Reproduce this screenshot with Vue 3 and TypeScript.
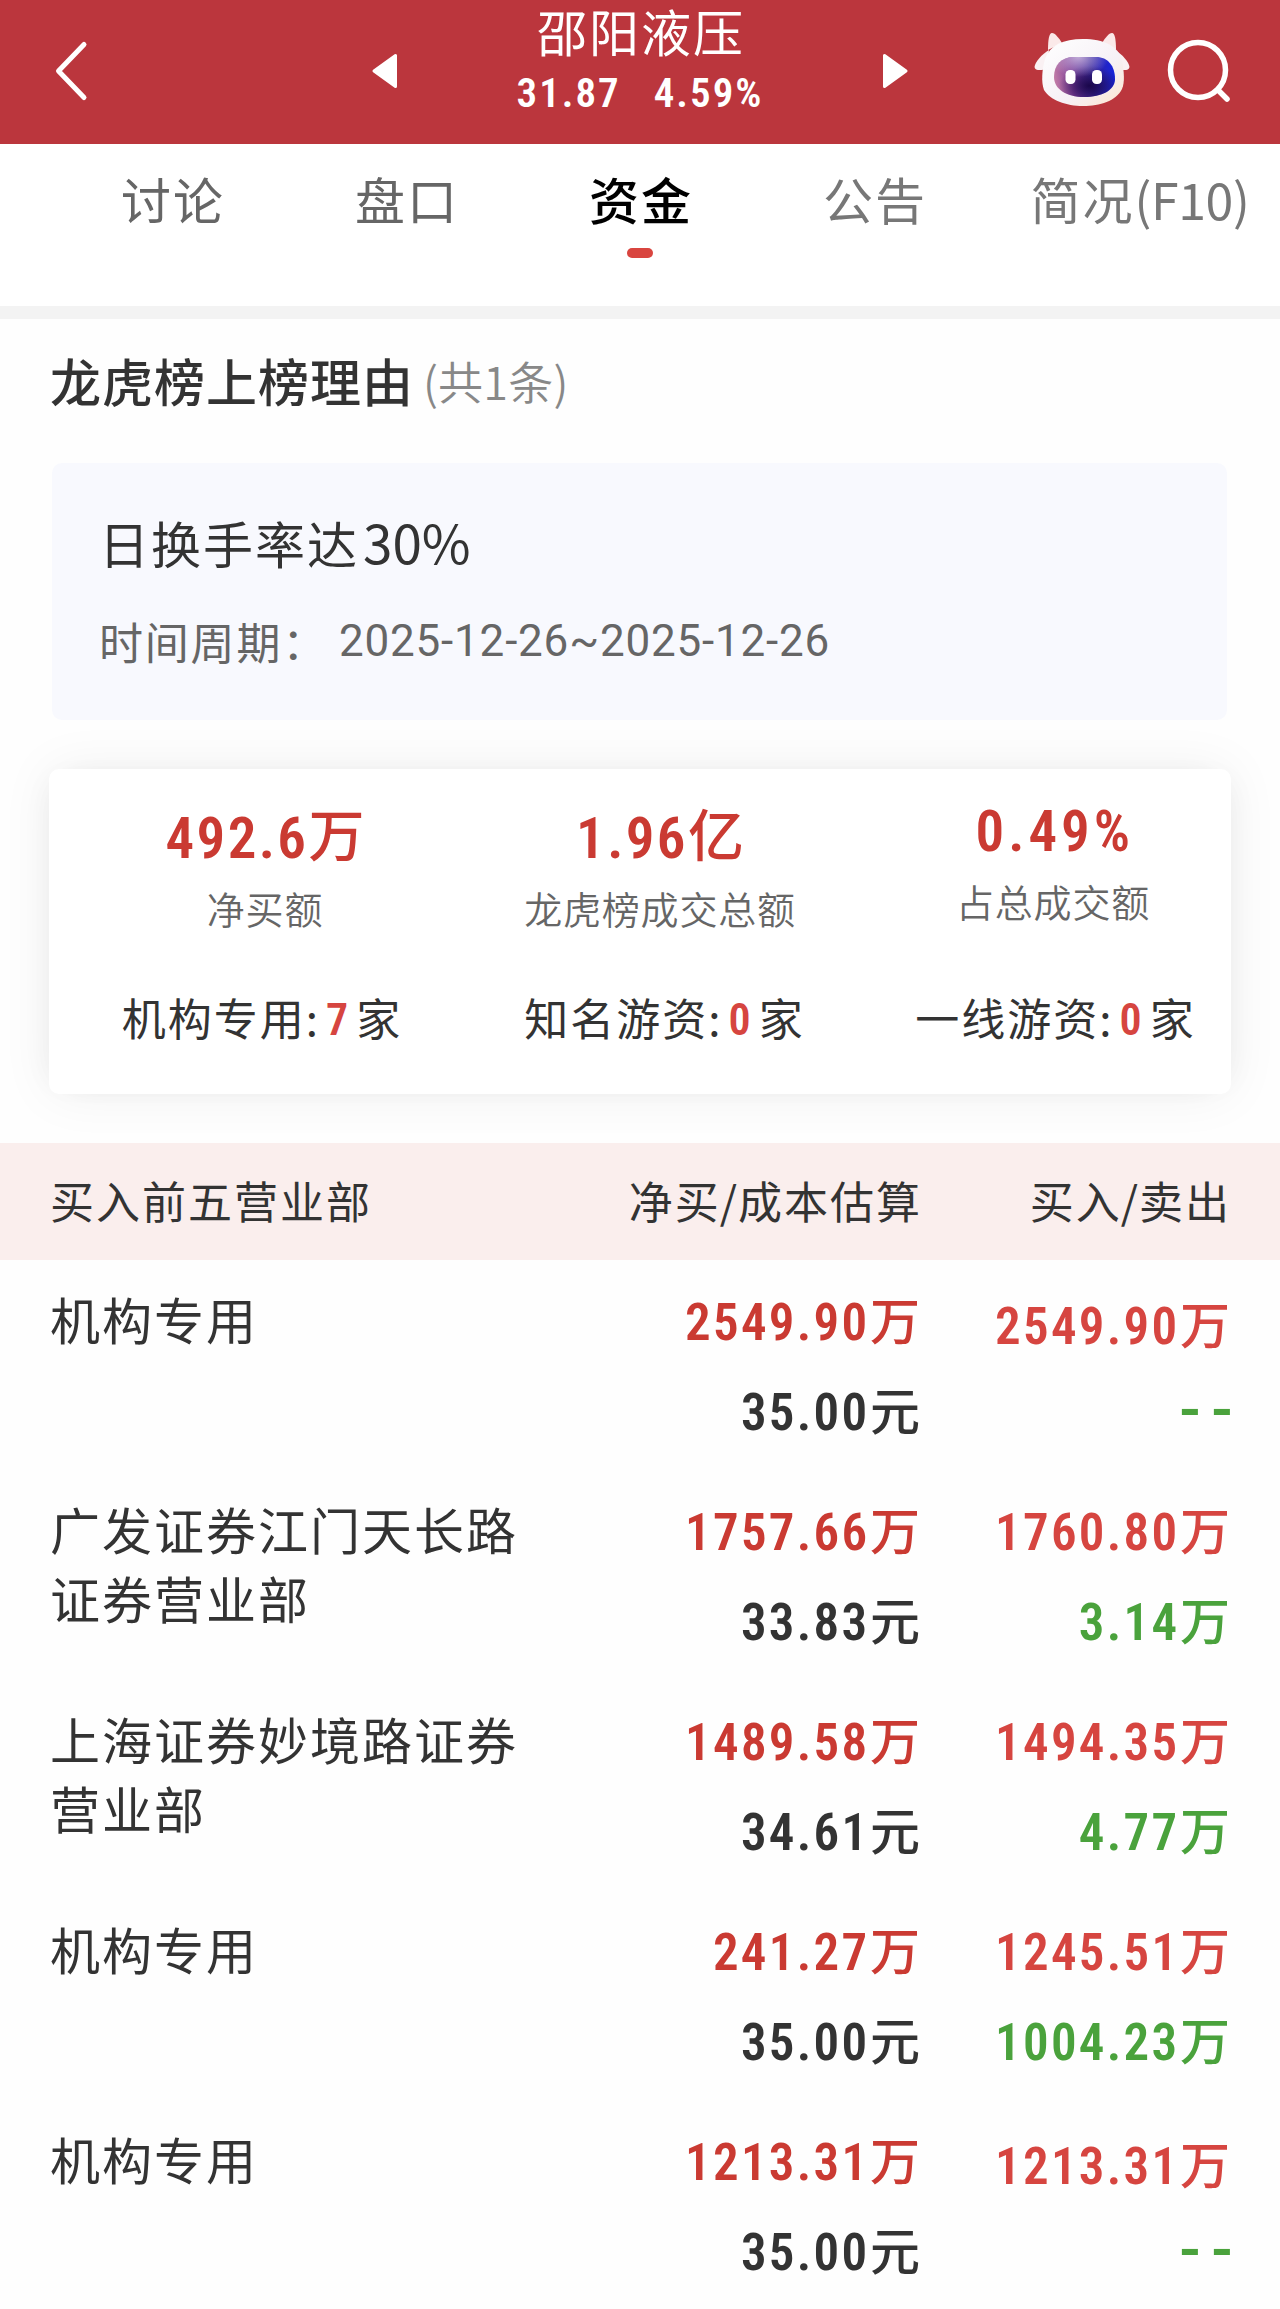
<script setup lang="ts">
interface Tab {
  label: string
  latin?: string
  active?: boolean
}

interface Stat {
  value: string
  unit: string
  label: string
}

interface Group {
  label: string
  count: number
}

interface Seat {
  name: string[]
  net: string
  cost: string
  buy: string
  sell: string | null
}

const tabs: Tab[] = [
  { label: '讨论' },
  { label: '盘口' },
  { label: '资金', active: true },
  { label: '公告' },
  { label: '简况', latin: '(F10)' },
]

const stats: Stat[] = [
  { value: '492.6', unit: '万', label: '净买额' },
  { value: '1.96', unit: '亿', label: '龙虎榜成交总额' },
  { value: '0.49%', unit: '', label: '占总成交额' },
]

const groups: Group[] = [
  { label: '机构专用', count: 7 },
  { label: '知名游资', count: 0 },
  { label: '一线游资', count: 0 },
]

const seats: Seat[] = [
  { name: ['机构专用'], net: '2549.90', cost: '35.00', buy: '2549.90', sell: null },
  { name: ['广发证券江门天长路', '证券营业部'], net: '1757.66', cost: '33.83', buy: '1760.80', sell: '3.14' },
  { name: ['上海证券妙境路证券', '营业部'], net: '1489.58', cost: '34.61', buy: '1494.35', sell: '4.77' },
  { name: ['机构专用'], net: '241.27', cost: '35.00', buy: '1245.51', sell: '1004.23' },
  { name: ['机构专用'], net: '1213.31', cost: '35.00', buy: '1213.31', sell: null },
]
</script>

<template>
  <div class="page">
    <header class="top">
      <svg class="back" viewBox="0 0 40 64" width="40" height="64">
        <path d="M32 5.5 L6.5 32 L32 58.5" fill="none" stroke="#fff" stroke-width="5" stroke-linecap="round" stroke-linejoin="round" />
      </svg>
      <svg class="prev" viewBox="0 0 28 36" width="28" height="36">
        <path d="M3 18 L24.5 2.5 V33.5 Z" fill="#fff" stroke="#fff" stroke-width="3" stroke-linejoin="round" />
      </svg>
      <div class="stock">
        <div class="stock-name">邵阳液压</div>
        <div class="stock-quote"><span>31.87</span><span>4.59%</span></div>
      </div>
      <svg class="next" viewBox="0 0 28 36" width="28" height="36">
        <path d="M25 18 L3.5 2.5 V33.5 Z" fill="#fff" stroke="#fff" stroke-width="3" stroke-linejoin="round" />
      </svg>
      <svg class="robot" viewBox="0 0 96 76" width="96" height="76">
        <defs>
          <linearGradient id="head" x1="0" y1="0" x2="1" y2="1">
            <stop offset="0" stop-color="#fff" />
            <stop offset="0.6" stop-color="#f6f1f6" />
            <stop offset="1" stop-color="#fde6cf" />
          </linearGradient>
          <linearGradient id="face" x1="0" y1="0.4" x2="1" y2="0.3">
            <stop offset="0" stop-color="#c07aa6" />
            <stop offset="0.28" stop-color="#7d3f98" />
            <stop offset="0.6" stop-color="#38279c" />
            <stop offset="1" stop-color="#1523dd" />
          </linearGradient>
          <radialGradient id="shade" cx="0.58" cy="0.72" r="0.5">
            <stop offset="0" stop-color="#180546" stop-opacity="0.95" />
            <stop offset="1" stop-color="#180546" stop-opacity="0" />
          </radialGradient>
          <radialGradient id="glow" cx="0.4" cy="0" r="0.5">
            <stop offset="0" stop-color="#d9c6e6" stop-opacity="0.8" />
            <stop offset="1" stop-color="#d9c6e6" stop-opacity="0" />
          </radialGradient>
        </defs>
        <path d="M14 18 C14 8 15 1 18 1 C21 1 25 6 28 11 Z" fill="#fbe9e9" />
        <path d="M82 18 C82 8 81 1 78 1 C75 1 71 6 68 11 Z" fill="#fbe9e9" />
        <path d="M15 18 C8 22 1 30 0.5 35 C1 39 7 38.500 13 37 Z" fill="#faf1f3" />
        <path d="M81 18 C88 22 95 30 95.500 35 C95 39 89 38.500 83 37 Z" fill="#faf1f3" />
        <path d="M49 7 C70 7 84 14 88 28 C90 40 91 50 88 57 C82 69 66 74 49 74 C32 74 16 68 10 58 C7 50 8 38 11 27 C16 13 29 7 49 7 Z" fill="url(#head)" />
        <path d="M40 25 H62 C74 25 81 34 81 47 C81 58 68 65 50 65 C32 65 20 57 20 45 C20 33 27 25 40 25 Z" fill="url(#face)" />
        <path d="M40 25 H62 C74 25 81 34 81 47 C81 58 68 65 50 65 C32 65 20 57 20 45 C20 33 27 25 40 25 Z" fill="url(#shade)" />
        <path d="M40 25 H62 C74 25 81 34 81 47 C81 58 68 65 50 65 C32 65 20 57 20 45 C20 33 27 25 40 25 Z" fill="url(#glow)" />
        <rect x="31.500" y="38" width="10" height="14" rx="4.500" fill="#fff" />
        <rect x="58" y="38" width="10" height="14" rx="4.500" fill="#fff" />
      </svg>
      <svg class="search" viewBox="0 0 68 68" width="68" height="68">
        <circle cx="32" cy="32" r="27.500" fill="none" stroke="#fff" stroke-width="5.500" />
        <path d="M52 52 L61 61" stroke="#fff" stroke-width="5.500" stroke-linecap="round" />
      </svg>
    </header>

    <nav class="tabs">
      <div v-for="tab in tabs" :key="tab.label" class="tab" :class="{ active: tab.active, long: tab.latin }">
        <span class="tab-label">{{ tab.label }}<span v-if="tab.latin" class="tab-latin">{{ tab.latin }}</span></span>
        <i v-if="tab.active" class="tab-mark"></i>
      </div>
    </nav>

    <section class="reason">
      <h2 class="heading">龙虎榜上榜理由<span class="heading-count">(共1条)</span></h2>
      <div class="reason-box">
        <div class="reason-title">日换手率达<span class="reason-rate">30%</span></div>
        <div class="reason-period">
          <span>时间周期：</span><span class="period-dates">2025-12-26~2025-12-26</span>
        </div>
      </div>
    </section>

    <section class="card">
      <div class="stats">
        <div v-for="stat in stats" :key="stat.label" class="stat" :class="{ unitless: !stat.unit }">
          <div class="stat-value"><span class="num">{{ stat.value }}</span><span class="unit">{{ stat.unit }}</span></div>
          <div class="stat-label">{{ stat.label }}</div>
        </div>
      </div>
      <div class="groups">
        <div v-for="group in groups" :key="group.label" class="group">
          {{ group.label }}<span class="colon">:</span><span class="num">{{ group.count }}</span>家
        </div>
      </div>
    </section>

    <section class="table">
      <div class="thead">
        <span class="c1">买入前五营业部</span>
        <span class="c2">净买<i>/</i>成本估算</span>
        <span class="c3">买入<i>/</i>卖出</span>
      </div>
      <div v-for="(seat, index) in seats" :key="index" class="row">
        <div class="c1 name"><div v-for="line in seat.name" :key="line">{{ line }}</div></div>
        <div class="c2 cell">
          <div class="net"><span class="num">{{ seat.net }}</span>万</div>
          <div class="cost"><span class="num">{{ seat.cost }}</span>元</div>
        </div>
        <div class="c3 cell" :class="{ blank: !seat.sell }">
          <div class="buy"><span class="num">{{ seat.buy }}</span>万</div>
          <div v-if="seat.sell" class="sell"><span class="num">{{ seat.sell }}</span>万</div>
          <div v-else class="sell none"><span class="num">--</span></div>
        </div>
      </div>
    </section>
  </div>
</template>

<style>
body {
  background: #fff;
}
</style>

<style scoped>
.page {
  width: 1280px;
  height: 2309px;
  overflow: hidden;
  background: #fefefe;
  color: #333;
  font-family: 'Noto Sans CJK SC', sans-serif;
  font-weight: 400;
}

.num {
  font-family: Roboto, 'Noto Sans CJK SC', sans-serif;
  font-weight: 600;
  font-stretch: 87%;
  line-height: 1;
}

.top {
  display: flex;
  align-items: flex-start;
  height: 144px;
  background: #bb363d;
  color: #fff;
}

.top svg {
  flex: none;
}

.back {
  margin: 39px 0 0 52px;
}

.prev {
  margin: 53px 0 0 279px;
}

.stock {
  width: 482px;
  text-align: center;
}

.stock-name {
  height: 66px;
  font-family: Roboto, 'Noto Sans CJK SC', sans-serif;
  font-size: 50px;
  line-height: 71px;
  letter-spacing: 2px;
  text-indent: 2px;
}

.stock-quote {
  display: flex;
  justify-content: center;
  gap: 33px;
  font-family: Roboto, sans-serif;
  font-size: 41px;
  font-weight: 600;
  font-stretch: 87%;
  line-height: 54px;
  letter-spacing: 2px;
}

.next {
  margin-top: 53px;
}

.robot {
  margin: 32px 0 0 125px;
}

.search {
  margin: 38px 0 0 36px;
}

.tabs {
  display: flex;
  height: 162px;
  padding-left: 55px;
  border-bottom: 13px solid #f3f3f3;
  background: #fff;
  box-sizing: content-box;
}

.tab {
  display: flex;
  flex: none;
  flex-direction: column;
  align-items: center;
  width: 234px;
  color: #666;
  font-size: 50px;
  line-height: 74px;
  padding-top: 17px;
  box-sizing: border-box;
  white-space: nowrap;
}

.tab:nth-child(4) {
  color: #777;
}

.tab-label {
  letter-spacing: 2px;
  margin-right: -2px;
}

.tab-latin {
  letter-spacing: -0.4px;
}

.tab.long {
  width: 216px;
  margin-left: 40px;
  color: #777;
}

.tab.active {
  color: #000;
  font-weight: 500;
}

.tab-mark {
  width: 26px;
  height: 10px;
  margin-top: 13px;
  border-radius: 5px;
  background: #d9453f;
}

.reason {
  padding: 0 53px 0 52px;
}

.heading {
  margin: 0 0 0 -2px;
  height: 144px;
  font-size: 51px;
  font-weight: 500;
  line-height: 122px;
  letter-spacing: 1px;
}

.heading-count {
  margin-left: 9px;
  color: #888;
  font-size: 45px;
  font-weight: 350;
  letter-spacing: 0.2px;
  vertical-align: 2px;
  line-height: 1;
}

.reason-box {
  height: 257px;
  padding: 43px 47px 0;
  border-radius: 10px;
  background: #f8f9fe;
  box-sizing: border-box;
}

.reason-title {
  height: 90px;
  font-size: 50px;
  line-height: 72px;
  letter-spacing: 2px;
}

.reason-rate {
  margin-left: 4px;
  font-size: 53px;
  line-height: 1;
  letter-spacing: 0;
}

.reason-period {
  display: flex;
  color: #666;
  font-size: 44px;
  line-height: 90px;
  letter-spacing: 1.8px;
}

.period-dates {
  margin-left: 11px;
  font-family: Roboto, sans-serif;
  line-height: 90px;
  letter-spacing: 0.8px;
}

.card {
  height: 325px;
  margin: 49px 49px 0;
  padding-top: 28px;
  border-radius: 10px;
  background: #fff;
  box-shadow:
    -10px 0 30px -14px rgba(0, 0, 0, 0.06),
    10px 0 30px -14px rgba(0, 0, 0, 0.06),
    0 0 54px rgba(0, 0, 0, 0.06);
  box-sizing: border-box;
}

.stats,
.groups {
  display: grid;
  grid-template-columns: 394px 394px 394px;
  justify-content: center;
}

.stats {
  height: 171px;
}

.stat {
  text-align: center;
  transform: translateX(19px);
}

.stat:nth-child(2) {
  transform: translateX(20px);
}

.stat-value {
  height: 76px;
  color: #ca3a32;
  font-size: 56px;
  font-weight: 500;
  line-height: 73px;
}

.stat-value .num {
  font-size: 57px;
  letter-spacing: 2.4px;
}

.stat.unitless .num {
  margin-right: -3.6px;
  letter-spacing: 4px;
}

.stat-value .unit {
  line-height: 1;
  vertical-align: 2px;
}

.stat-label {
  color: #666;
  font-size: 38px;
  font-weight: 350;
  line-height: 69px;
  letter-spacing: 0.8px;
}

.stat.unitless {
  margin-top: -7px;
}

.groups {
  padding-left: 16px;
  justify-content: start;
}

.group {
  font-size: 44px;
  line-height: 99px;
  letter-spacing: 2px;
  text-align: center;
}

.group:nth-child(2) {
  padding-left: 17px;
}

.group:nth-child(3) {
  padding-left: 11px;
}

.group .num {
  margin: 0 6px;
  color: #d64540;
  font-size: 44px;
  vertical-align: 1px;
}

.table {
  margin-top: 49px;
}

.thead,
.row {
  display: grid;
  grid-template-columns: 550px 320px 309px;
  padding-left: 50px;
}

.thead {
  height: 117px;
  background: #faeeed;
  font-size: 44px;
  line-height: 115px;
  letter-spacing: 2px;
}

.thead i {
  margin: 0 -1px;
  font-style: normal;
}

.c2,
.c3 {
  text-align: right;
  white-space: nowrap;
}

.thead .c2,
.thead .c3 {
  margin-right: -2px;
}

.row {
  height: 210px;
}

.name {
  padding-top: 24px;
  font-size: 50px;
  line-height: 69px;
  letter-spacing: 2px;
}

.cell {
  display: flex;
  flex-direction: column;
  gap: 30px;
  padding-top: 28px;
  font-size: 50px;
  font-weight: 500;
  line-height: 60px;
}

.cell.c3 {
  margin-right: -1px;
}

.cell .num {
  margin-right: 0.5px;
  font-size: 51px;
  letter-spacing: 2.3px;
}

.cell.blank {
  gap: 26px;
  padding-top: 32px;
}

.net {
  color: #ca3a32;
}

.buy {
  color: #d64540;
}

.sell {
  color: #4aa23c;
}

.sell.none .num {
  margin-right: -13px;
  font-size: 60px;
  font-stretch: 100%;
  letter-spacing: 10px;
}
</style>
